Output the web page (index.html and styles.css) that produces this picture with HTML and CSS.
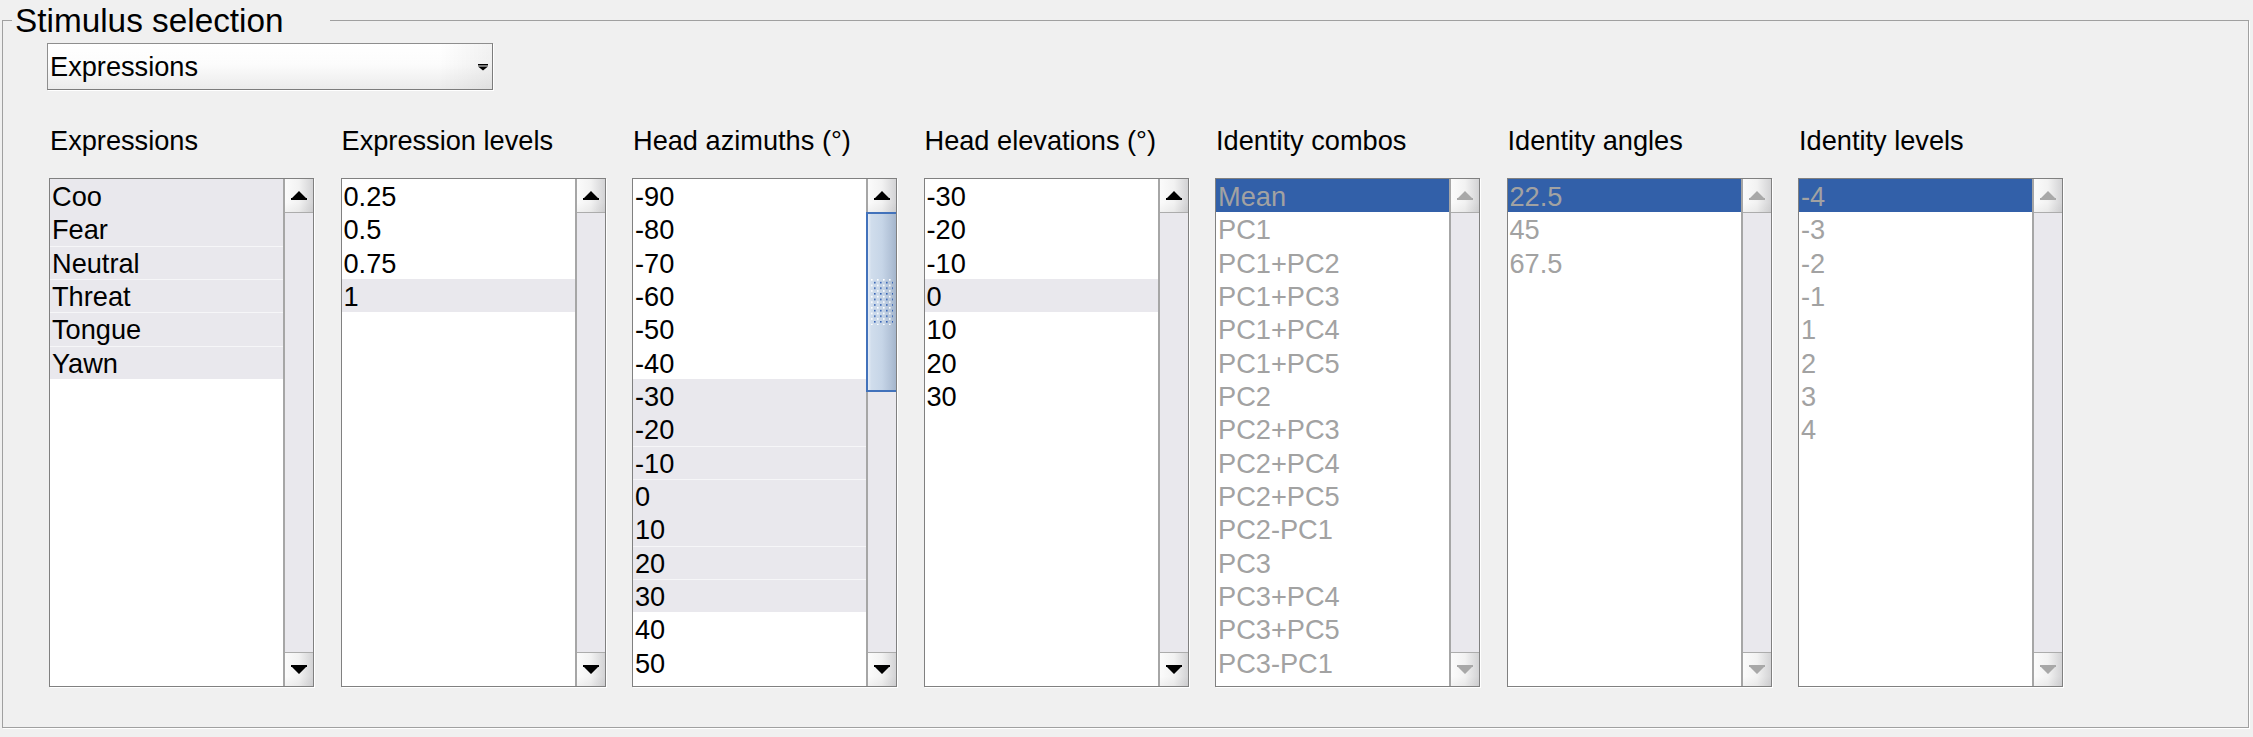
FILE: index.html
```html
<!DOCTYPE html>
<html>
<head>
<meta charset="utf-8">
<title>Stimulus selection</title>
<link rel="stylesheet" href="styles.css">
</head>
<body>
<fieldset class="frame">
  <legend class="frame-title">Stimulus selection</legend>
  <div class="content">
    <div class="combo">
      <span class="combo-text">Expressions</span>
      <svg class="combo-arrow" width="10" height="7" viewBox="0 0 10 7"><path d="M0 0H10V1.4H0Z M0 2.4H10L5 6.6Z"/></svg>
    </div>

    <div class="columns">
      <div class="col">
        <div class="hdr">Expressions</div>
        <div class="list">
          <div class="items">
            <div class="row sel">Coo</div>
            <div class="row sel">Fear</div>
            <div class="row sel sep">Neutral</div>
            <div class="row sel sep">Threat</div>
            <div class="row sel sep">Tongue</div>
            <div class="row sel sep">Yawn</div>
          </div>
          <div class="sb">
            <div class="sb-btn"><svg class="arr" width="16" height="9" viewBox="0 0 16 9"><path d="M8 0L15 7H1Z M0 7H16V9H0Z"/></svg></div>
            <div class="track"></div>
            <div class="sb-btn"><svg class="arr" width="16" height="9" viewBox="0 0 16 9"><path d="M0 0H16V2H0Z M1 2H15L8 9Z"/></svg></div>
          </div>
        </div>
      </div>

      <div class="col">
        <div class="hdr">Expression levels</div>
        <div class="list">
          <div class="items">
            <div class="row">0.25</div>
            <div class="row">0.5</div>
            <div class="row">0.75</div>
            <div class="row sel">1</div>
          </div>
          <div class="sb">
            <div class="sb-btn"><svg class="arr" width="16" height="9" viewBox="0 0 16 9"><path d="M8 0L15 7H1Z M0 7H16V9H0Z"/></svg></div>
            <div class="track"></div>
            <div class="sb-btn"><svg class="arr" width="16" height="9" viewBox="0 0 16 9"><path d="M0 0H16V2H0Z M1 2H15L8 9Z"/></svg></div>
          </div>
        </div>
      </div>

      <div class="col">
        <div class="hdr">Head azimuths (°)</div>
        <div class="list">
          <div class="items">
            <div class="row">-90</div>
            <div class="row">-80</div>
            <div class="row">-70</div>
            <div class="row">-60</div>
            <div class="row">-50</div>
            <div class="row">-40</div>
            <div class="row sel">-30</div>
            <div class="row sel">-20</div>
            <div class="row sel sep">-10</div>
            <div class="row sel sep">0</div>
            <div class="row sel">10</div>
            <div class="row sel sep">20</div>
            <div class="row sel sep">30</div>
            <div class="row">40</div>
            <div class="row">50</div>
          </div>
          <div class="sb">
            <div class="sb-btn"><svg class="arr" width="16" height="9" viewBox="0 0 16 9"><path d="M8 0L15 7H1Z M0 7H16V9H0Z"/></svg></div>
            <div class="track">
              <div class="thumb">
                <svg class="grip" width="22" height="46" viewBox="0 0 22 46">
                  <defs>
                    <pattern id="gripdots" width="6" height="5.6" patternUnits="userSpaceOnUse">
                      <rect x="0" y="0" width="1.6" height="1.6" fill="#ffffff"/>
                      <rect x="3" y="2.8" width="1.6" height="1.6" fill="#3462b4"/>
                    </pattern>
                  </defs>
                  <rect x="0" y="0" width="22" height="46" fill="url(#gripdots)"/>
                </svg>
              </div>
            </div>
            <div class="sb-btn"><svg class="arr" width="16" height="9" viewBox="0 0 16 9"><path d="M0 0H16V2H0Z M1 2H15L8 9Z"/></svg></div>
          </div>
        </div>
      </div>

      <div class="col">
        <div class="hdr">Head elevations (°)</div>
        <div class="list">
          <div class="items">
            <div class="row">-30</div>
            <div class="row">-20</div>
            <div class="row">-10</div>
            <div class="row sel">0</div>
            <div class="row">10</div>
            <div class="row">20</div>
            <div class="row">30</div>
          </div>
          <div class="sb">
            <div class="sb-btn"><svg class="arr" width="16" height="9" viewBox="0 0 16 9"><path d="M8 0L15 7H1Z M0 7H16V9H0Z"/></svg></div>
            <div class="track"></div>
            <div class="sb-btn"><svg class="arr" width="16" height="9" viewBox="0 0 16 9"><path d="M0 0H16V2H0Z M1 2H15L8 9Z"/></svg></div>
          </div>
        </div>
      </div>

      <div class="col disabled">
        <div class="hdr">Identity combos</div>
        <div class="list">
          <div class="items">
            <div class="row cur">Mean</div>
            <div class="row">PC1</div>
            <div class="row">PC1+PC2</div>
            <div class="row">PC1+PC3</div>
            <div class="row">PC1+PC4</div>
            <div class="row">PC1+PC5</div>
            <div class="row">PC2</div>
            <div class="row">PC2+PC3</div>
            <div class="row">PC2+PC4</div>
            <div class="row">PC2+PC5</div>
            <div class="row">PC2-PC1</div>
            <div class="row">PC3</div>
            <div class="row">PC3+PC4</div>
            <div class="row">PC3+PC5</div>
            <div class="row">PC3-PC1</div>
          </div>
          <div class="sb">
            <div class="sb-btn"><svg class="arr" width="16" height="9" viewBox="0 0 16 9"><path d="M8 0L15 7H1Z M0 7H16V9H0Z"/></svg></div>
            <div class="track"></div>
            <div class="sb-btn"><svg class="arr" width="16" height="9" viewBox="0 0 16 9"><path d="M0 0H16V2H0Z M1 2H15L8 9Z"/></svg></div>
          </div>
        </div>
      </div>

      <div class="col disabled">
        <div class="hdr">Identity angles</div>
        <div class="list">
          <div class="items">
            <div class="row cur">22.5</div>
            <div class="row">45</div>
            <div class="row">67.5</div>
          </div>
          <div class="sb">
            <div class="sb-btn"><svg class="arr" width="16" height="9" viewBox="0 0 16 9"><path d="M8 0L15 7H1Z M0 7H16V9H0Z"/></svg></div>
            <div class="track"></div>
            <div class="sb-btn"><svg class="arr" width="16" height="9" viewBox="0 0 16 9"><path d="M0 0H16V2H0Z M1 2H15L8 9Z"/></svg></div>
          </div>
        </div>
      </div>

      <div class="col disabled">
        <div class="hdr">Identity levels</div>
        <div class="list">
          <div class="items">
            <div class="row cur">-4</div>
            <div class="row">-3</div>
            <div class="row">-2</div>
            <div class="row">-1</div>
            <div class="row">1</div>
            <div class="row">2</div>
            <div class="row">3</div>
            <div class="row">4</div>
          </div>
          <div class="sb">
            <div class="sb-btn"><svg class="arr" width="16" height="9" viewBox="0 0 16 9"><path d="M8 0L15 7H1Z M0 7H16V9H0Z"/></svg></div>
            <div class="track"></div>
            <div class="sb-btn"><svg class="arr" width="16" height="9" viewBox="0 0 16 9"><path d="M0 0H16V2H0Z M1 2H15L8 9Z"/></svg></div>
          </div>
        </div>
      </div>
    </div>
  </div>
</fieldset>
</body>
</html>
```

FILE: styles.css
```css
html, body {
  margin: 0;
  padding: 0;
}

body {
  width: 2253px;
  height: 737px;
  overflow: hidden;
  background: #f0f0f0;
  font-family: "Liberation Sans", Arial, sans-serif;
  color: #000;
}

.frame {
  margin: 0 0 0 2px;
  padding: 0;
  width: 2247px;
  height: 728px;
  box-sizing: border-box;
  border: 1px solid #a0a0a0;
  box-shadow: 1px 1px 0 #ffffff;
  min-inline-size: 0;
}

.frame-title {
  margin-left: 9px;
  padding: 0 46px 0 3px;
  font-size: 33.33px;
  line-height: 41px;
  white-space: nowrap;
}

.content {
  padding-left: 44px;
}

.combo {
  margin-top: 2px;
  width: 446px;
  height: 47px;
  box-sizing: border-box;
  border: 1px solid #8e8e8e;
  border-right-color: #7c7c7c;
  border-bottom-color: #7c7c7c;
  box-shadow: 1px 1px 0 #ffffff;
  background:
    linear-gradient(90deg, rgba(0, 0, 0, 0) 88%, rgba(0, 0, 0, 0.05) 100%),
    linear-gradient(180deg, #ffffff 0%, #fcfcfc 45%, #ebebeb 100%);
  display: flex;
  align-items: center;
  justify-content: space-between;
  padding: 0 4px 0 2px;
  font-size: 27.2px;
  line-height: 45px;
}

.combo-arrow {
  fill: #000;
  margin-top: 1px;
}

.columns {
  display: grid;
  grid-template-columns: repeat(7, 265px);
  column-gap: 26.5px;
  margin: 36px 0 0 2px;
}

.hdr {
  font-size: 27.2px;
  line-height: 30px;
  padding-left: 1px;
  margin-bottom: 22px;
  white-space: nowrap;
}

.list {
  height: 509px;
  box-sizing: border-box;
  border: 1px solid #808080;
  box-shadow: 1px 1px 0 #ffffff;
  background: #ffffff;
  display: flex;
}

.items {
  flex: 1;
  min-width: 0;
  overflow: hidden;
  font-size: 27.2px;
}

.row {
  height: 33.35px;
  box-sizing: border-box;
  padding: 3px 0 0 2px;
  line-height: 30px;
  white-space: nowrap;
}

.row.sel {
  background: #e9e8ed;
}

.row.sep {
  box-shadow: inset 0 1px 0 #f6f6f8;
}

.disabled .row {
  color: #a2a2a2;
}

.row.cur {
  background: #3260a9;
}

.sb {
  width: 30px;
  flex: none;
  box-sizing: border-box;
  border-left: 2px solid #a6a6a6;
  display: flex;
  flex-direction: column;
  background: #e9e8ed;
}

.sb-btn {
  flex: none;
  height: 33px;
  display: flex;
  align-items: center;
  justify-content: center;
  background:
    linear-gradient(180deg, rgba(255, 255, 255, 0) 70%, rgba(0, 0, 0, 0.04) 100%),
    linear-gradient(90deg, #fbfbfb 0%, #f2f2f2 50%, #d3d3d5 100%);
}

.arr {
  fill: #000;
}

.disabled .arr {
  fill: #a8a8a8;
}

.track {
  flex: 1;
  border-top: 1px solid #acacac;
  border-bottom: 1px solid #acacac;
}

.thumb {
  height: 180px;
  margin: -1px 0 0 -2px;
  box-sizing: border-box;
  border: 2px solid #4272bb;
  border-right: 0;
  background: linear-gradient(90deg, #e6edf6 0%, #d0ddec 12%, #c6d5e7 50%, #b3c3d8 80%, #a4b5cb 100%);
  display: flex;
  align-items: center;
  justify-content: center;
}

.grip {
  display: block;
}
```
